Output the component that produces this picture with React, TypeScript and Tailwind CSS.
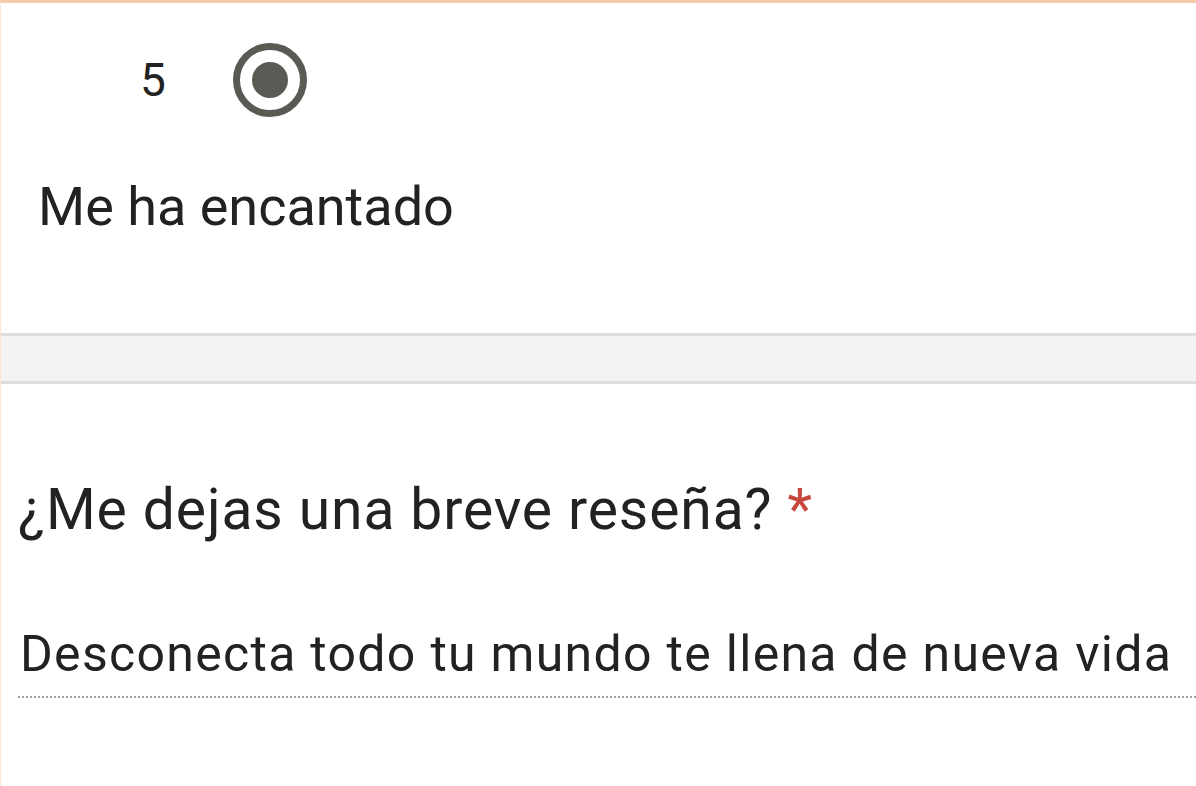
export default function App() {
  return (
    <div
      className="h-[786px] w-[1196px] overflow-hidden bg-white border-t-[3px] border-t-[#f4cda8] border-l border-l-[#fbe6d6] text-[#222]"
      style={{ fontFamily: "Roboto, 'Noto Sans', sans-serif" }}
    >
      {/* option row */}
      <section className="h-[330px]">
        <div className="flex items-center pt-[40px] pl-[139px]">
          <span className="text-[46px] leading-none">5</span>
          <div className="ml-[67px] flex h-[74px] w-[74px] items-center justify-center rounded-full border-[7px] border-[#5a5954]">
            <div className="h-[36px] w-[36px] rounded-full bg-[#5a5954]" />
          </div>
        </div>
        <p className="mt-[60px] pl-[37px] text-[54px] leading-[60px]">Me ha encantado</p>
      </section>

      {/* divider */}
      <div className="h-[51px] border-y-[3px] border-[#dededd] bg-[#f3f3f1]" />

      {/* question */}
      <section className="pt-[94px] pl-[17px]">
        <h2 className="text-[57px] leading-[64px] tracking-[0.9px]">
          ¿Me dejas una breve reseña? <span className="text-[#c8473d]">*</span>
        </h2>
        <div className="mt-[84px] border-b-2 border-dotted border-[#a3a3a3] pb-[14px] pl-[2px]">
          <p className="text-[50px] leading-[56px] tracking-[1.3px] whitespace-nowrap">
            Desconecta todo tu mundo te llena de nueva vida
          </p>
        </div>
      </section>
    </div>
  );
}
